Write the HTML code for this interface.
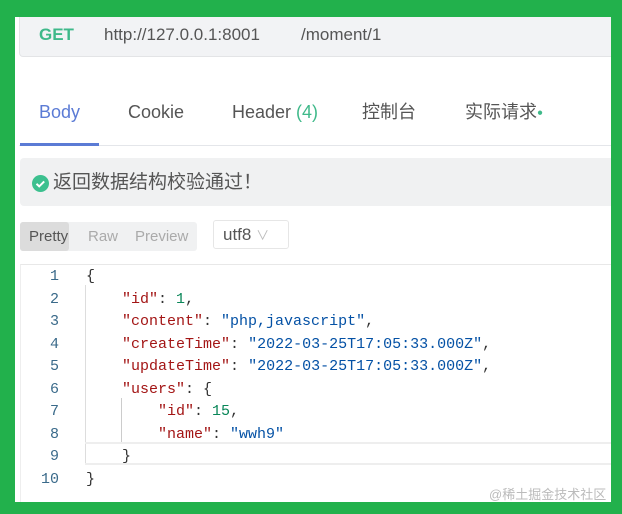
<!DOCTYPE html>
<html><head><meta charset="utf-8"><style>
*{margin:0;padding:0;box-sizing:border-box}
body{width:622px;height:514px;background:#22b14c;position:relative;overflow:hidden;font-family:"Liberation Sans","Noto Sans CJK SC",sans-serif}
.in{position:absolute;left:15px;top:17px;width:596px;height:485px;background:#fff;overflow:hidden}
.url{position:absolute;left:4px;top:0;width:600px;height:40px;background:#f2f3f5;border:1px solid #e3e4e6;border-top:none;border-radius:0 0 4px 4px;font-size:17px;color:#555}
.url span{position:absolute;top:8px}
.tab{position:absolute;top:83px;height:24px;line-height:24px;font-size:18px;color:#555;white-space:nowrap}
.ln{position:absolute;left:4px;top:128px;width:600px;height:1px;background:#e4e6ea}
.ul{position:absolute;left:5px;top:126px;width:79px;height:3px;background:#5b7bd5}
.alert{position:absolute;left:5px;top:141px;width:600px;height:48px;background:#f0f1f2;border-radius:4px}
.seg{position:absolute;left:5px;top:205px;width:177px;height:29px;background:#f0f1f2;border-radius:3px;font-size:15px;color:#aaa}
.seg span{position:absolute;top:6px}
.code{position:absolute;left:5px;top:247px;width:600px;height:240px;border-top:1px solid #e8e8e8;border-left:1px solid #eee;font-family:"Liberation Mono",monospace;font-size:15px}
.r{position:absolute;left:0;height:22px;line-height:22px;white-space:pre;width:600px}
.n{position:absolute;width:38px;text-align:right;color:#3a6a8a}
.t{position:absolute;left:65px;color:#333}
.k{color:#a31515}.s{color:#0451a5}.d{color:#098658}
</style></head><body><div class="in">
<div class="url"><span style="left:19px;color:#3fb98a;font-weight:bold">GET</span><span style="left:84px">http://127.0.0.1:8001</span><span style="left:281px">/moment/1</span></div>
<div class="tab" style="left:24px;color:#5b7bd5">Body</div>
<div class="tab" style="left:113px">Cookie</div>
<div class="tab" style="left:217px">Header <span style="color:#3fb98a">(4)</span></div>
<div class="tab" style="left:347px">控制台</div>
<div class="tab" style="left:450px">实际请求<span style="color:#3fb98a;font-size:10px;vertical-align:middle">●</span></div>
<div class="ln"></div><div class="ul"></div>
<div class="alert"><svg style="position:absolute;left:12px;top:17px" width="17" height="17" viewBox="0 0 17 17"><circle cx="8.5" cy="8.5" r="8.5" fill="#3cc08f"/><path d="M4.5 8.8l2.7 2.6 5-5" stroke="#fff" stroke-width="2" fill="none"/></svg><span style="position:absolute;left:33px;top:13px;line-height:24px;font-size:19px;color:#555">返回数据结构校验通过！</span></div>
<div class="seg"><span style="left:0;top:0;width:49px;height:29px;background:#dcdcdc;border-radius:3px;color:#555;padding:6px 0 0 9px">Pretty</span><span style="left:68px">Raw</span><span style="left:115px">Preview</span></div>
<div style="position:absolute;left:198px;top:203px;width:76px;height:29px;border:1px solid #e6e6e6;border-radius:3px;font-size:17px;color:#555;padding:4px 0 0 9px">utf8 <span style="color:#bbb;font-size:13px">∨</span></div>
<div class="code">
<div style="position:absolute;left:64px;top:20px;width:1px;height:180px;background:#ddd"></div>
<div style="position:absolute;left:100px;top:133px;width:1px;height:45px;background:#ccc"></div>
<div style="position:absolute;left:64px;top:177px;width:540px;height:23px;border-top:2px solid #eee;border-bottom:2px solid #eee"></div>
<div class="r" style="top:1px"><span class="n">1</span><span class="t">{</span></div>
<div class="r" style="top:23.5px"><span class="n">2</span><span class="t">    <span class="k">"id"</span>: <span class="d">1</span>,</span></div>
<div class="r" style="top:46px"><span class="n">3</span><span class="t">    <span class="k">"content"</span>: <span class="s">"php,javascript"</span>,</span></div>
<div class="r" style="top:68.5px"><span class="n">4</span><span class="t">    <span class="k">"createTime"</span>: <span class="s">"2022-03-25T17:05:33.000Z"</span>,</span></div>
<div class="r" style="top:91px"><span class="n">5</span><span class="t">    <span class="k">"updateTime"</span>: <span class="s">"2022-03-25T17:05:33.000Z"</span>,</span></div>
<div class="r" style="top:113.5px"><span class="n">6</span><span class="t">    <span class="k">"users"</span>: {</span></div>
<div class="r" style="top:136px"><span class="n">7</span><span class="t">        <span class="k">"id"</span>: <span class="d">15</span>,</span></div>
<div class="r" style="top:158.5px"><span class="n">8</span><span class="t">        <span class="k">"name"</span>: <span class="s">"wwh9"</span></span></div>
<div class="r" style="top:181px"><span class="n">9</span><span class="t">    }</span></div>
<div class="r" style="top:203.5px"><span class="n">10</span><span class="t">}</span></div>
</div>
<div style="position:absolute;left:474px;top:467px;font-size:13px;color:#bbb">@稀土掘金技术社区</div>
</div></body></html>
